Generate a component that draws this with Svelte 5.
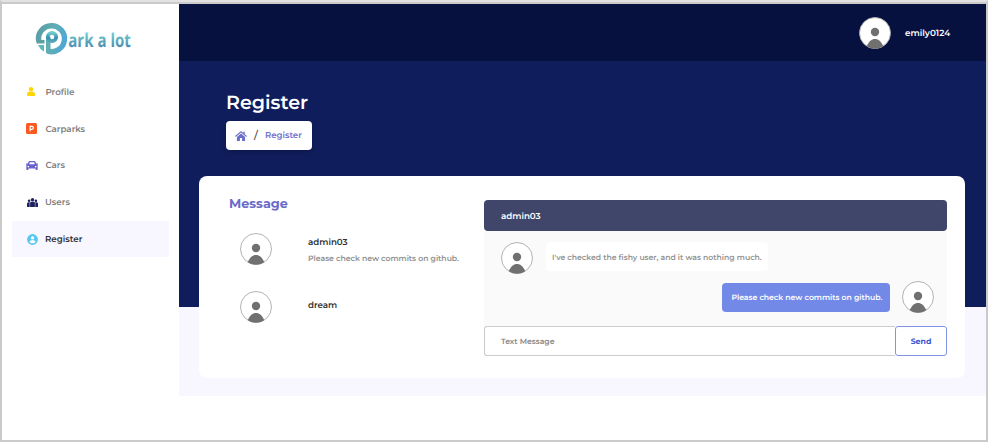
<script>
  const nav = [
    { label: 'Profile', icon: 'user' },
    { label: 'Carparks', icon: 'park' },
    { label: 'Cars', icon: 'car' },
    { label: 'Users', icon: 'users' },
    { label: 'Register', icon: 'circle', active: true },
  ];
  const threads = [
    { name: 'admin03', text: 'Please check new commits on github.' },
    { name: 'dream', text: '' },
  ];
</script>

{#snippet avatar()}
  <svg class="avatar" viewBox="0 0 32 32">
    <circle cx="16" cy="16" r="15.5" fill="#fff" stroke="#aaa" stroke-width=".9" />
    <circle cx="16" cy="15" r="4.2" fill="#707070" />
    <path d="M7.700 29.200C10 24.500 12.500 22 16 22s6 2.500 8.300 7.200A15.500 15.500 0 0 1 7.700 29.200Z" fill="#707070" />
  </svg>
{/snippet}

<div class="frame">
  <aside>
    <div class="logo">
      <svg width="98" height="34" viewBox="0 0 98 34">
        <defs>
          <linearGradient id="ring" gradientUnits="userSpaceOnUse" x1="0" y1="12" x2="31" y2="19">
            <stop offset="0" stop-color="#5a9ea5" /><stop offset=".55" stop-color="#60adb5" /><stop offset="1" stop-color="#4ba6dc" />
          </linearGradient>
          <linearGradient id="stem" x1="0" y1="0" x2="0" y2="1">
            <stop offset="0" stop-color="#72ccce" /><stop offset=".6" stop-color="#398fae" /><stop offset="1" stop-color="#55a5b8" />
          </linearGradient>
          <linearGradient id="word" x1="0" y1="0" x2="0" y2="1">
            <stop offset=".2" stop-color="#72cfce" /><stop offset=".85" stop-color="#4382ae" />
          </linearGradient>
        </defs>
        <path d="M2.700 18A13 13 0 1 1 12 28.200" fill="none" stroke="url(#ring)" stroke-width="5.400" />
        <path d="M0 17H8.500V20.500H.8A15 15 0 0 1 0 17Z" fill="#5b9fa5" />
        <path d="M2 22H8V28.700A15 15 0 0 1 2 22Z" fill="#61b7be" />
        <path d="M10 30.300V14h4.500v16.800Z" fill="#5fadb5" />
        <circle cx="16" cy="14" r="4.200" fill="none" stroke="url(#stem)" stroke-width="3.800" />
        <text x="32.300" y="24.300" textLength="62.500" lengthAdjust="spacingAndGlyphs" fill="url(#word)">ark a lot</text>
      </svg>
    </div>
    <nav>
      {#each nav as item}
        <a class:active={item.active} class={item.icon}>
          <span class="icon">
            {#if item.icon === 'user'}
              <svg width="8" height="9" viewBox="0 0 8 9" fill="#ffd600"><circle cx="4" cy="2.200" r="2.200" /><path d="M0 7.200C0 5.500 1 4.700 2.200 4.700h3.600C7 4.700 8 5.500 8 7.200v1q0 .8-.8.8H.8Q0 9 0 8.200Z" /></svg>
            {:else if item.icon === 'park'}
              <svg width="11" height="11" viewBox="0 0 11 11"><rect width="11" height="11" rx="1.500" fill="#fb5a22" /><path d="M4.100 8.300V3.300h1.800a1.500 1.500 0 0 1 0 3H4.100" fill="none" stroke="#fff" stroke-width="1.150" /></svg>
            {:else if item.icon === 'car'}
              <svg width="12" height="9" viewBox="0 0 12 9" fill="#6a62cb"><path fill-rule="evenodd" d="M3.800 0h4.400q1 0 1.400 1l.5 1.400H12v1.200h-.8q.5.500.5 1.200v3.500q0 .7-.7.700h-.8q-.7 0-.7-.7V7.500h-7v.8q0 .7-.7.700H1q-.7 0-.7-.7V4.800q0-.7.5-1.200H0V2.400h1.900L2.400 1q.4-1 1.400-1ZM3.900 1.300 3.300 3.200h5.400l-.6-1.900ZM1.500 4.900v1.100l1.500.4V4.900Zm7.500 0v1.500l1.500-.4V4.900Z" /></svg>
            {:else if item.icon === 'users'}
              <svg width="11" height="9" viewBox="0 0 11 9" fill="#1c2260"><circle cx="5.500" cy="1.700" r="1.700" /><circle cx="2.100" cy="2.700" r="1.300" /><circle cx="8.900" cy="2.700" r="1.300" /><path d="M3.100 9V5.100q0-1.400 1.300-1.400h2.200q1.300 0 1.300 1.400V9ZM0 9V5.800q0-1.500 1.400-1.500H2.700V9ZM8.300 9V4.300h1.300Q11 4.300 11 5.800V9Z" /></svg>
            {:else}
              <svg width="11" height="11" viewBox="0 0 11 11"><circle cx="5.500" cy="5.500" r="5.400" fill="#56c8f0" /><circle cx="5.500" cy="3.900" r="1.700" fill="#fff" /><path d="M2.300 7.700Q3.700 6.100 5.500 6.100T8.700 7.700Q7.600 9.300 5.500 9.300T2.300 7.700Z" fill="#fff" /></svg>
            {/if}
          </span>
          <span class="t">{item.label}</span>
        </a>
      {/each}
    </nav>
  </aside>

  <main>
    <header>{@render avatar()}<span class="t login">emily0124</span></header>
    <section class="hero">
      <h1>Register</h1>
      <div class="crumb">
        <svg width="12" height="10" viewBox="0 0 13 11" fill="#6b6dcb"><path d="M6.500 0 9 2.100V.8h1.600v2.700L13 5.600l-.7.900L6.500 1.600.7 6.500 0 5.600Z" /><path d="M2 6.500 6.500 2.700 11 6.500V11H7.700V7.600H5.300V11H2Z" /></svg>
        <span class="slash">/</span>
        <span class="t here">Register</span>
      </div>
    </section>
    <section class="card">
      <div class="threads">
        <h2>Message</h2>
        {#each threads as th}
          <div class="thread">
            {@render avatar()}
            <div class="info">
              <div class="t name">{th.name}</div>
              {#if th.text}<div class="t preview">{th.text}</div>{/if}
            </div>
          </div>
        {/each}
      </div>
      <div class="chat">
        <div class="title"><span class="t">admin03</span></div>
        <div class="log">
          <div class="msg">{@render avatar()}<div class="bubble t">I've checked the fishy user, and it was nothing much.</div></div>
          <div class="msg mine"><div class="bubble t">Please check new commits on github.</div>{@render avatar()}</div>
        </div>
        <div class="compose">
          <div class="field"><span class="t">Text Message</span></div>
          <div class="send"><span class="t">Send</span></div>
        </div>
      </div>
    </section>
  </main>
</div>

<style>
  :global(body) { background: #fff; }
  * { box-sizing: border-box; }
  .frame {
    width: 988px; height: 442px; display: flex; overflow: hidden;
    border: 2px solid #cacaca; border-top-color: #e2e2e2; box-shadow: inset 0 2px #cacaca;
    padding-top: 2px; background: #fff;
    font-family: Montserrat, Inter, sans-serif; font-weight: 600; font-size: 8.700px;
    text-rendering: geometricPrecision;
  }
  .t { white-space: nowrap; display: inline-block; line-height: 12px; }
  aside { width: 177px; flex: none; }
  .logo { padding: 19px 0 0 34px; height: 70px; }
  .logo svg { display: block; overflow: visible; }
  .logo text { font: 700 19px "Open Sans", sans-serif; }
  nav { padding-left: 10px; }
  nav a { display: flex; align-items: center; width: 157px; height: 36.700px; padding-left: 14px; color: #808080; }
  nav a .t { padding-top: 1px; }
  nav a.active { background: #f8f7ff; color: #303035; }
  .icon { width: 19.400px; display: flex; align-items: center; flex: none; }
  .icon svg { margin-top: -1px; }
  .user .icon, .users .icon, .circle .icon { padding-left: 1px; }
  .users .icon, .circle .icon { width: 19px; }
  .users .icon svg, .circle .icon svg { margin-top: 0; }
  main { flex: none; width: 807px; height: 392px; background: linear-gradient(#101d5c 303px, #f8f7ff 303px); }
  header { height: 57px; background: #071140; display: flex; align-items: center; padding-left: 680px; }
  .avatar { width: 32px; height: 32px; flex: none; display: block; }
  .login { color: #fff; margin-left: 14px; padding-top: 2px; font-size: 8.800px; }
  .hero { height: 115px; padding: 30px 0 0 47px; }
  h1 { margin: 0; font-size: 19.100px; line-height: 24px; font-weight: 600; color: #fff; }
  .crumb { margin-top: 6px; width: 86.400px; height: 29px; background: #fff; border-radius: 4px; display: flex; align-items: center; padding-left: 9px; box-shadow: 0 2px 4px #0003; }
  .slash { font-size: 11px; color: #444; margin: -1px 7px 0 7px; font-weight: 500; }
  .here { color: #7170cc; font-size: 8.600px; }
  .card { margin-left: 20px; width: 766.400px; height: 202.400px; background: #fff; border-radius: 8px; display: flex; }
  .threads { width: 285px; padding: 20px 0 0 30px; }
  h2 { margin: 0; font-size: 12.800px; line-height: 18px; font-weight: 700; color: #6a6bc9; }
  .thread { height: 57.500px; display: flex; padding-left: 11px; }
  .thread:first-of-type { margin-top: 19px; }
  .info { padding: 4px 0 0 36px; }
  .info .name { display: block; color: #303030; }
  .thread:last-child .info { padding-top: 9px; }
  .preview { color: #909090; font-size: 7.700px; margin-top: 4px; }
  .chat { width: 463px; padding-top: 24px; flex: none; }
  .title { height: 31px; border-radius: 4px; background: #404669; color: #fff; display: flex; align-items: center; padding: 2px 0 0 17px; }
  .log { height: 95px; background: #fafafa; padding: 11px 13px 0 17px; }
  .msg { display: flex; height: 39px; }
  .bubble { height: 29px; line-height: 31px; font-size: 7.700px; border-radius: 4px; margin-left: 13px; width: 222px; padding-left: 6px; background: #fff; color: #929292; }
  .mine { justify-content: flex-end; }
  .mine .bubble { width: 168px; line-height: 29px; margin: 2px 12px 0 0; background: #7389e7; color: #fff; padding-left: 9.400px; }
  .compose { display: flex; height: 30px; }
  .field { flex: 1; border: 1px solid #ccc; border-right: 0; border-radius: 3px 0 0 3px; display: flex; align-items: center; padding: 1px 0 0 16px; color: #888; font-size: 7.700px; }
  .send { width: 52px; border: 1px solid #8193e6; border-radius: 3px; display: flex; align-items: center; justify-content: center; color: #3b55d0; font-size: 7.800px; font-weight: 700; }
</style>
